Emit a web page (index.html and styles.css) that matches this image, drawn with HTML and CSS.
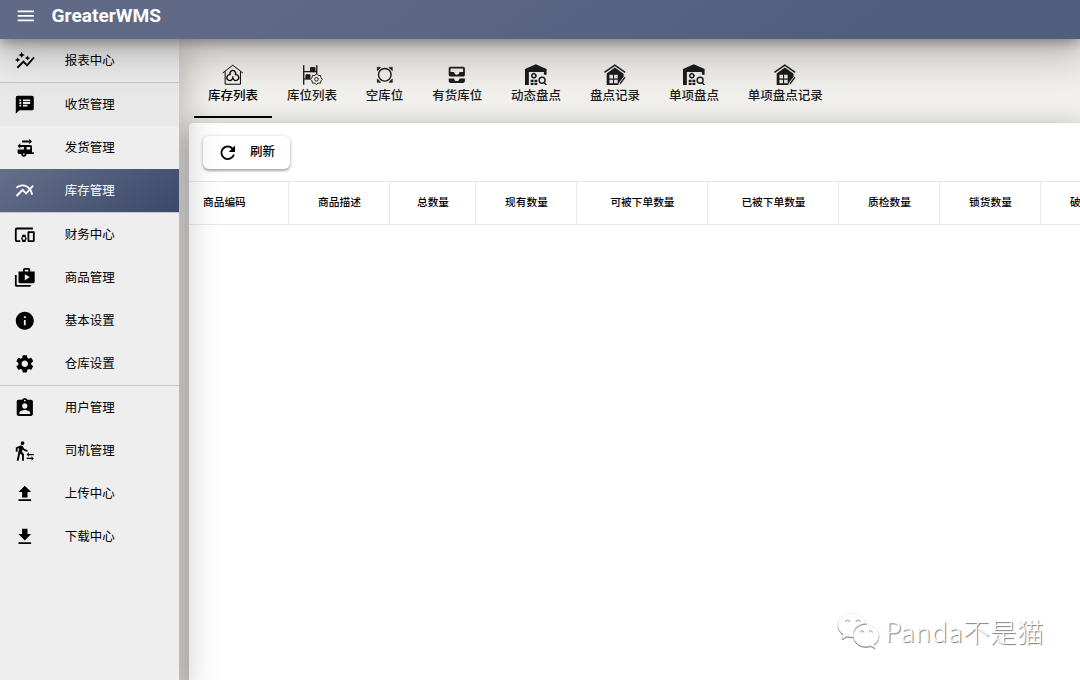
FILE: index.html
```html
<!DOCTYPE html>
<html lang="zh-CN">
<head>
  <meta charset="UTF-8">
  <title>GreaterWMS</title>
  <meta name="viewport" content="width=device-width, initial-scale=1.0">
  <link rel="stylesheet" href="styles.css">
</head>
<body>
  <header class="topbar">
    <div class="toolbar">
      <svg class="icon" viewBox="0 0 24 24"><path d="M3 18h18v-2H3v2zm0-5h18v-2H3v2zm0-7v2h18V6H3z"/></svg>
      <h1>GreaterWMS</h1>
    </div>
  </header>

  <div class="layout">
    <!-- 左侧菜单 -->
    <nav class="drawer">
      <a class="item">
        <svg class="icon" viewBox="0 0 24 24"><path d="M14.06 9.94L12 9l2.06-.94L15 6l.94 2.06L18 9l-2.06.94L15 12l-.94-2.06zM4 14l.94-2.06L7 11l-2.06-.94L4 8l-.94 2.06L1 11l2.06.94L4 14zm4.5-5l1.09-2.41L12 5.5 9.59 4.41 8.5 2 7.41 4.41 5 5.5l2.41 1.09L8.5 9zm-4 11.5l6-6.01 4 4L23 8.93l-1.41-1.41-7.09 7.97-4-4L3 19l1.5 1.5z"/></svg>
        <span>报表中心</span>
      </a>
      <hr>
      <a class="item hover">
        <svg class="icon" viewBox="0 0 24 24"><path d="M20 2H4c-1.1 0-1.99.9-1.99 2L2 22l4-4h14c1.1 0 2-.9 2-2V4c0-1.1-.9-2-2-2zM8 14H6v-2h2v2zm0-3H6V9h2v2zm0-3H6V6h2v2zm7 6h-5v-2h5v2zm3-3h-8V9h8v2zm0-3h-8V6h8v2z"/></svg>
        <span>收货管理</span>
      </a>
      <a class="item">
        <svg class="icon" viewBox="0 0 24 24"><path d="M20 17v-6c0-1.1-.9-2-2-2H7V7l-3 3 3 3v-2h4v3H4v3c0 1.1.9 2 2 2h2c0 1.66 1.34 3 3 3s3-1.34 3-3h8v-2h-2zm-9 3c-.55 0-1-.45-1-1s.45-1 1-1 1 .45 1 1-.45 1-1 1zm7-6h-4v-3h4v3zM17 2v2H9v2h8v2l3-3z"/></svg>
        <span>发货管理</span>
      </a>
      <a class="item active">
        <svg class="icon" viewBox="0 0 24 24"><path d="M22 6.92l-1.41-1.41-2.85 3.21C15.68 6.4 12.83 5 9.61 5 6.72 5 4.07 6.16 2 8l1.42 1.42C5.12 7.93 7.27 7 9.61 7c2.74 0 5.09 1.26 6.77 3.24l-2.88 3.24-4-4L2 16.99l1.5 1.5 6-6.01 4 4 4.05-4.55c.75 1.35 1.25 2.9 1.44 4.55H21c-.22-2.3-.95-4.39-2.04-6.14L22 6.92z"/></svg>
        <span>库存管理</span>
      </a>
      <hr>
      <a class="item">
        <svg class="icon" viewBox="0 0 24 24"><path d="M3 6h18V4H3c-1.1 0-2 .9-2 2v12c0 1.1.9 2 2 2h4v-2H3V6zm10 6H9v1.78c-.61.55-1 1.33-1 2.22s.39 1.67 1 2.22V20h4v-1.78c.61-.55 1-1.34 1-2.22s-.39-1.67-1-2.22V12zm-2 5.5c-.83 0-1.5-.67-1.5-1.5s.67-1.5 1.5-1.5 1.5.67 1.5 1.5-.67 1.5-1.5 1.5zM22 8h-6c-.5 0-1 .5-1 1v10c0 .5.5 1 1 1h6c.5 0 1-.5 1-1V9c0-.5-.5-1-1-1zm-1 10h-4v-8h4v8z"/></svg>
        <span>财务中心</span>
      </a>
      <a class="item">
        <svg class="icon" viewBox="0 0 24 24"><path d="M3 9H1v11c0 1.11.89 2 2 2h14c1.11 0 2-.89 2-2H3V9zm15-4V3c0-1.11-.89-2-2-2h-4c-1.11 0-2 .89-2 2v2H5v11c0 1.11.89 2 2 2h14c1.11 0 2-.89 2-2V5h-5zm-6-2h4v2h-4V3zm0 12V8l5.5 3-5.5 4z"/></svg>
        <span>商品管理</span>
      </a>
      <a class="item">
        <svg class="icon" viewBox="0 0 24 24"><path d="M12 2C6.48 2 2 6.48 2 12s4.48 10 10 10 10-4.48 10-10S17.52 2 12 2zm1 15h-2v-6h2v6zm0-8h-2V7h2v2z"/></svg>
        <span>基本设置</span>
      </a>
      <a class="item">
        <svg class="icon" viewBox="0 0 24 24"><path d="M19.14 12.94c.04-.3.06-.61.06-.94 0-.32-.02-.64-.07-.94l2.03-1.58c.18-.14.23-.41.12-.61l-1.92-3.32c-.12-.22-.37-.29-.59-.22l-2.39.96c-.5-.38-1.03-.7-1.62-.94l-.36-2.54c-.04-.24-.24-.41-.48-.41h-3.84c-.24 0-.43.17-.47.41l-.36 2.54c-.59.24-1.13.57-1.62.94l-2.39-.96c-.22-.08-.47 0-.59.22L2.74 8.87c-.12.21-.08.47.12.61l2.03 1.58c-.05.3-.09.63-.09.94s.02.64.07.94l-2.03 1.58c-.18.14-.23.41-.12.61l1.92 3.32c.12.22.37.29.59.22l2.39-.96c.5.38 1.03.7 1.62.94l.36 2.54c.05.24.24.41.48.41h3.84c.24 0 .44-.17.47-.41l.36-2.54c.59-.24 1.13-.56 1.62-.94l2.39.96c.22.08.47 0 .59-.22l1.92-3.32c.12-.22.07-.47-.12-.61l-2.01-1.58zM12 15.6c-1.98 0-3.6-1.62-3.6-3.6s1.62-3.6 3.6-3.6 3.6 1.62 3.6 3.6-1.62 3.6-3.6 3.6z"/></svg>
        <span>仓库设置</span>
      </a>
      <hr>
      <a class="item">
        <svg class="icon" viewBox="0 0 24 24"><path d="M19 3h-4.18C14.4 1.84 13.3 1 12 1c-1.3 0-2.4.84-2.82 2H5c-1.1 0-2 .9-2 2v14c0 1.1.9 2 2 2h14c1.1 0 2-.9 2-2V5c0-1.1-.9-2-2-2zm-7 0c.55 0 1 .45 1 1s-.45 1-1 1-1-.45-1-1 .45-1 1-1zm0 4c1.66 0 3 1.34 3 3s-1.34 3-3 3-3-1.34-3-3 1.34-3 3-3zm6 12H6v-1.4c0-2 4-3.1 6-3.1s6 1.1 6 3.1V19z"/></svg>
        <span>用户管理</span>
      </a>
      <a class="item">
        <svg class="icon" viewBox="0 0 24 24"><path d="M16.49 15.5v-1.75L14 16.25l2.49 2.5V17H22v-1.5zm3.02 4.25H14v1.5h5.51V23L22 20.5 19.51 18zM9.5 5.5c1.1 0 2-.9 2-2s-.9-2-2-2-2 .9-2 2 .9 2 2 2zM5.75 8.9L3 23h2.1l1.75-8L9 17v6h2v-7.55L8.95 13.4l.6-3C10.85 12 12.8 13 15 13v-2c-1.85 0-3.45-1-4.35-2.45l-.95-1.6C9.35 6.35 8.7 6 8 6c-.25 0-.5.05-.75.15L2 8.3V13h2V9.65l1.75-.75"/></svg>
        <span>司机管理</span>
      </a>
      <a class="item">
        <svg class="icon" viewBox="0 0 24 24"><path d="M9 16h6v-6h4l-7-7-7 7h4zm-4 2h14v2H5z"/></svg>
        <span>上传中心</span>
      </a>
      <a class="item">
        <svg class="icon" viewBox="0 0 24 24"><path d="M19 9h-4V3H9v6H5l7 7 7-7zM5 18v2h14v-2H5z"/></svg>
        <span>下载中心</span>
      </a>
    </nav>

    <main class="page">
      <div class="tabs">
        <a class="tab current">
          <svg class="icon line" viewBox="0 0 24 24"><path d="M.8 10L12 1.3l11.2 8.7M3.5 8.5V22.500h17V8.500"/><path d="M9.400 12a3.100 3.100 0 1 1 5.200 0M9.400 12a3.200 3.200 0 1 0 1.600 5.200l1-1.500 1 1.500a3.200 3.200 0 1 0 1.600-5.200M12 15.700v-2.200" stroke-width="1.400"/></svg>
          <span>库存列表</span>
        </a>
        <a class="tab">
          <svg class="icon line" viewBox="0 0 24 24"><path d="M3 1.500V23M17.500 1.500V11M3 8.500h15M3 16.500h7" stroke-width="1.500"/><path class="solid" d="M10.500 4h5v4.500h-5zM5.500 12h4.500v4.500H5.500z"/><path d="M17.200 11l1.900 1.900 2.600-.2.500 2.600 1.600 1.700-1.600 1.700-.5 2.600-2.600-.2-1.900 1.900-1.900-1.900-2.600.2-.5-2.600-1.600-1.700 1.600-1.700.5-2.600 2.600.2z"/><circle cx="17.200" cy="17" r="2"/></svg>
          <span>库位列表</span>
        </a>
        <a class="tab">
          <svg class="icon line" viewBox="0 0 24 24"><circle cx="12" cy="12" r="7" stroke-width="1.600"/><path class="solid" d="M3.500 3.500h4L5.700 5.700 3.500 7.500zM20.500 3.500v4l-2.200-1.800-1.800-2.200zM20.500 20.500h-4l1.800-2.200 2.200-1.800zM3.500 20.500v-4l2.200 1.800 1.800 2.200z" stroke-width=".4"/></svg>
          <span>空库位</span>
        </a>
        <a class="tab">
          <svg class="icon" viewBox="0 0 24 24"><path d="M19 3H5c-1.100 0-2 .9-2 2v7c0 1.100.9 2 2 2h14c1.100 0 2-.9 2-2V5c0-1.100-.9-2-2-2zm0 6h-4c0 1.620-1.380 3-3 3s-3-1.380-3-3H5V5h14v4zm-4 7h6v3c0 1.100-.9 2-2 2H5c-1.100 0-2-.9-2-2v-3h6c0 1.660 1.340 3 3 3s3-1.340 3-3z"/></svg>
          <span>有货库位</span>
        </a>
        <a class="tab">
          <svg class="icon" viewBox="0 0 24 24"><path d="M0 5.500L12 .3l12 5.200V12h-3V9H4.300v15H0z"/><path d="M6.300 17.500h3.200v2.800H6.300zM6.300 21.200h3.200V24H6.300zM10.500 17.500h3.200v2.800h-3.200zM10.500 21.200h3.200V24h-3.200z"/><g class="ring"><circle cx="9.800" cy="13" r="2.200"/><circle cx="19" cy="18" r="3.300"/><path d="M21.300 20.500l2.500 3M9.800 9.800v1M9.800 15.200v1M6.700 13h1M11.900 13h1"/></g></svg>
          <span>动态盘点</span>
        </a>
        <a class="tab">
          <svg class="icon" viewBox="0 0 24 24"><path class="roof" d="M.5 9.300L12 1.200l11.500 8.100"/><path d="M12 3.800l9.800 7v3.500L16 22v2H3V10.500z"/><path class="hole" d="M6 12h4v4.200H6zM11.200 12h4v4.200h-4zM6 17.500h4v4H6zM11.200 17.500h4v4h-4z"/><path class="pen" d="M17.500 20.500l5-6.500 1.700 1.300-5 6.600-2.400 1.700z"/></svg>
          <span>盘点记录</span>
        </a>
        <a class="tab">
          <svg class="icon" viewBox="0 0 24 24"><path d="M0 5.500L12 .3l12 5.200V12h-3V9H4.300v15H0z"/><path d="M6.300 17.500h3.200v2.800H6.300zM6.300 21.200h3.200V24H6.300zM10.500 17.500h3.200v2.800h-3.200zM10.500 21.200h3.200V24h-3.200z"/><g class="ring"><circle cx="9.800" cy="13" r="2.200"/><circle cx="19" cy="18" r="3.300"/><path d="M21.300 20.500l2.500 3M9.800 9.800v1M9.800 15.200v1M6.700 13h1M11.900 13h1"/></g></svg>
          <span>单项盘点</span>
        </a>
        <a class="tab">
          <svg class="icon" viewBox="0 0 24 24"><path class="roof" d="M.5 9.300L12 1.200l11.500 8.100"/><path d="M12 3.800l9.800 7v3.500L16 22v2H3V10.500z"/><path class="hole" d="M6 12h4v4.200H6zM11.200 12h4v4.200h-4zM6 17.500h4v4H6zM11.200 17.500h4v4h-4z"/><path class="pen" d="M17.500 20.500l5-6.500 1.700 1.300-5 6.600-2.400 1.700z"/></svg>
          <span>单项盘点记录</span>
        </a>
      </div>

      <section class="card">
        <div class="card-top">
          <button class="refresh-btn">
            <svg class="icon" viewBox="0 0 24 24"><path d="M17.65 6.35C16.2 4.9 14.21 4 12 4c-4.42 0-7.99 3.58-7.99 8s3.57 8 7.99 8c3.73 0 6.84-2.55 7.73-6h-2.08c-.82 2.33-3.04 4-5.65 4-3.31 0-6-2.69-6-6s2.69-6 6-6c1.66 0 3.14.69 4.22 1.78L13 11h7V4l-2.35 2.35z"/></svg>
            刷新
          </button>
        </div>
        <table>
          <colgroup>
            <col class="w-first"><col class="w-4"><col class="w-3"><col class="w-4"><col class="w-6"><col class="w-6"><col class="w-4"><col class="w-4"><col class="w-4">
          </colgroup>
          <thead>
            <tr>
              <th>商品编码</th>
              <th>商品描述</th>
              <th>总数量</th>
              <th>现有数量</th>
              <th>可被下单数量</th>
              <th>已被下单数量</th>
              <th>质检数量</th>
              <th>锁货数量</th>
              <th>破损数量</th>
            </tr>
          </thead>
        </table>
      </section>
    </main>
  </div>

  <div class="watermark">
    <svg viewBox="0 0 44 38">
      <path d="M15 1C7 1 1 6.300 1 13c0 4 2 7 5.200 9.300L5 27l5-2.700c2 .6 4 .8 6.500.7C15 17 21 11.500 29.500 11.500 28 5 22 1 15 1z"/>
      <path d="M29 13c-7 0-12.500 4.800-12.500 10.700S22 34.500 29 34.500c1.800 0 3.300-.3 4.800-.8L38 36l-1-3.700c3-2 5-5 5-8.600C42 17.800 36 13 29 13z"/>
      <path class="eyes" d="M8.500 10a2 2 0 0 1 4 0M19 10a2 2 0 0 1 4 0M23.500 20.500a1.700 1.700 0 0 1 3.400 0M32 20.500a1.700 1.700 0 0 1 3.400 0"/>
    </svg>
    <span>Panda不是猫</span>
  </div>
</body>
</html>
```
FILE: styles.css
```css
:root {
  --line: #e8e8e8;
  --drawer: #eee;
}

* {
  box-sizing: border-box;
}

body {
  margin: 0;
  height: 100vh;
  overflow: hidden;
  position: relative;
  display: flex;
  flex-direction: column;
  background: #eee;
  color: #000;
  font: 12.5px/1.5 Roboto, "Noto Sans CJK SC", sans-serif;
}

.icon {
  width: 21.6px;
  height: 21.6px;
  flex: none;
  display: block;
  fill: currentColor;
}

/* 顶栏 */
.topbar {
  flex: none;
  height: 39px;
  position: relative;
  z-index: 3;
  color: #fff;
  background: linear-gradient(145deg, #606a87 20%, #505e7e 80%);
  box-shadow: 0 3px 12px rgba(0, 0, 0, .35), 0 9px 42px 7px rgba(0, 0, 0, .26);
}

.toolbar {
  height: 32px;
  padding-left: 15px;
  display: flex;
  align-items: center;
  gap: 15px;
}

.toolbar h1 {
  margin: 0;
  font-size: 19.1px;
  line-height: 32px;
  font-weight: 700;
}

.layout {
  flex: 1;
  min-height: 0;
  display: flex;
}

/* 侧边菜单 */
.drawer {
  flex: none;
  width: 179px;
  position: relative;
  z-index: 2;
  background: var(--drawer);
  box-shadow: 0 10px 34px 5px rgba(0, 0, 0, .24);
}

.drawer hr {
  height: 1px;
  margin: 0;
  border: 0;
  background: #c8c8c8;
}

.item {
  height: 43px;
  padding: 1px 0 0 14.4px;
  display: flex;
  align-items: center;
  gap: 28.8px;
}

.item .icon {
  margin-top: -1px;
}

.item.hover {
  background: #e8e8e8;
}

.item.active {
  color: #fff;
  background: linear-gradient(145deg, #646f8a, #3b4869);
}

/* 主体 */
.page {
  flex: 1;
  min-width: 0;
  overflow: hidden;
  display: flex;
  flex-direction: column;
  background: #f2f0ed;
}

.tabs {
  flex: none;
  height: 84px;
  padding: 14px 0 5px 14.6px;
  display: flex;
}

.tab {
  padding: 10.5px 14.45px 0;
  display: flex;
  flex-direction: column;
  align-items: center;
  white-space: nowrap;
  color: #1c1c1c;
  font-weight: 500;
}

.tab span {
  line-height: 22px;
}

.tab.current {
  color: #000;
  border-bottom: 2px solid #000;
}

.line {
  fill: none;
  stroke: currentColor;
  stroke-width: 1.1;
}

.solid {
  fill: currentColor;
}

.ring,
.roof {
  fill: none;
  stroke: currentColor;
  stroke-width: 1.6;
}

.hole {
  fill: #e6e5e3;
}

.pen {
  stroke: #e6e5e3;
  stroke-width: .8;
}

/* 卡片延伸到窗口底部之外 */
.card {
  flex: none;
  height: 640px;
  margin-left: 10px;
  background: #fff;
  border-top-left-radius: 4px;
  box-shadow: 0 9px 26px 3px rgba(0, 0, 0, .32);
}

.card-top {
  height: 58px;
  padding: 13px 14px;
}

.refresh-btn {
  width: 87px;
  height: 33px;
  padding: 0 0 0 14.4px;
  display: flex;
  align-items: center;
  gap: 11px;
  border: 0;
  border-radius: 6px;
  background: #fff;
  color: #000;
  font: inherit;
  font-weight: 500;
  box-shadow: 0 1px 4px rgba(0, 0, 0, .24), 0 2px 2px rgba(0, 0, 0, .2);
}

table {
  width: 952px;
  table-layout: fixed;
  border-collapse: separate;
  border-spacing: 0;
}

.w-first {
  width: 99px;
}

.w-3 {
  width: 86px;
}

.w-4 {
  width: 101px;
}

.w-6 {
  width: 131px;
}

th {
  height: 44px;
  padding: 0 0 0 1px;
  border: solid var(--line);
  border-width: 1px 0 1px 1px;
  font-size: 10.7px;
  font-weight: 500;
  text-align: center;
}

th:first-child {
  padding-left: 14px;
  border-left: 0;
  text-align: left;
}

/* 右下角水印 */
.watermark {
  position: absolute;
  right: 36px;
  bottom: 30px;
  z-index: 4;
  display: flex;
  align-items: center;
  gap: 4px;
  color: #fff;
  font: 300 26.5px/38px "Noto Sans CJK SC", sans-serif;
  letter-spacing: .5px;
  text-shadow: 1px 1px 1px #777;
}

.watermark svg {
  width: 44px;
  height: 38px;
  fill: #fff;
  stroke: #ddd;
  stroke-width: .5;
  filter: drop-shadow(.8px 1px .6px #777);
}

.watermark .eyes {
  fill: none;
  stroke: #999;
  stroke-width: 1;
}
```
